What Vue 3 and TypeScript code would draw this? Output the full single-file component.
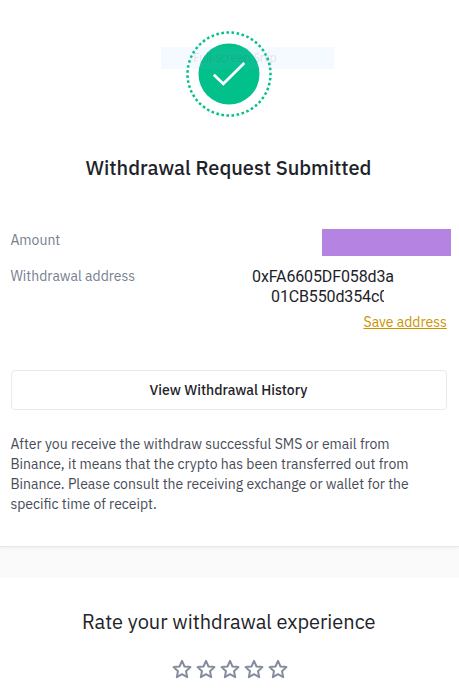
<script setup lang="ts">
import { ref } from 'vue'

const notice: string[] = [
  'After you receive the withdraw successful SMS or email from',
  'Binance, it means that the crypto has been transferred out from',
  'Binance. Please consult the receiving exchange or wallet for the',
  'specific time of receipt.',
]
const stars: number[] = [1, 2, 3, 4, 5]
const rating = ref<number>(0)
</script>

<template>
  <main class="page">
    <section class="result">
      <div class="status">
        <svg class="badge" width="86" height="86" viewBox="0 0 86 86" aria-hidden="true">
          <circle cx="43" cy="43" r="41.5" fill="none" stroke="#02c089" stroke-width="2.5" pathLength="102" stroke-dasharray="1 1" stroke-dashoffset="0.5" />
          <circle cx="43" cy="43" r="30.5" fill="#02c089" />
          <path d="M27.8 43.8 37.3 52.8 58.3 32" fill="none" stroke="#fff" stroke-width="2.7" />
        </svg>
        <div class="snip">Full-screen Snip</div>
      </div>
      <h1 class="title">Withdrawal Request Submitted</h1>
      <div class="row amount">
        <span class="label">Amount</span>
        <span class="mask"></span>
      </div>
      <div class="row">
        <span class="label">Withdrawal address</span>
        <div class="address">
          <span>0xFA6605DF058d3a</span>
          <span class="tail">01CB550d354c0</span>
        </div>
      </div>
      <a class="save">Save address</a>
      <button class="history" type="button">View Withdrawal History</button>
      <p class="notice">
        <span v-for="(line, i) in notice" :key="i">{{ line }}</span>
      </p>
    </section>
    <section class="rate">
      <h2>Rate your withdrawal experience</h2>
      <div class="stars">
        <svg v-for="s in stars" :key="s" width="24" height="24" viewBox="0 0 24 24" @click="rating = s">
          <path
            d="M12 3.8 14.5 9.5 20.4 10.1 16 14.3 17.2 20.2 12 17.2 6.8 20.2 8 14.3 3.6 10.1 9.5 9.5Z"
            :fill="s <= rating ? '#848e9c' : 'none'" stroke="#848e9c" stroke-width="2" stroke-linejoin="round"
          />
        </svg>
      </div>
    </section>
  </main>
</template>

<style>
body { background: #fafafa; }
</style>
<style scoped>
.page { width: 459px; height: 696px; overflow: hidden; background: #fafafa; font-family: "IBM Plex Sans", Roboto, sans-serif; color: #1e2329; }
.result { box-sizing: border-box; height: 547px; padding: 31px 12.6px 0 10.4px; background: #fff; border-bottom: 1px solid #e8e8e8; box-shadow: 0 1px 3px rgba(0, 0, 0, .05); }
.status { position: relative; height: 86px; }
.badge { display: block; margin-left: 175.6px; }
.snip { position: absolute; left: 150.6px; top: 16px; width: 173px; height: 22px; padding-left: 32px; box-sizing: border-box; background: rgba(120, 190, 250, .08); color: rgba(110, 40, 40, .12); font: 12px/22px "Noto Sans", sans-serif; letter-spacing: -.3px; white-space: nowrap; }
.title { margin: 36px 0 0; height: 30px; font-size: 20px; line-height: 30px; font-weight: 500; text-align: center; white-space: nowrap; }
.row { display: flex; justify-content: space-between; height: 36px; font-size: 14px; line-height: 20px; }
.amount { margin-top: 47px; }
.label { color: #76808f; }
.mask { width: 129px; height: 27px; margin: -1px -4.6px 0 0; background: #b584e3; }
.address { display: flex; flex-direction: column; width: 194.4px; padding-top: 1px; color: #1e2329; font-family: Roboto, sans-serif; font-size: 16px; letter-spacing: -.13px; white-space: nowrap; }
.address span { flex: none; }
.tail { width: 113px; margin-left: 19px; overflow: hidden; }
.save { display: block; width: max-content; margin: 10px -.4px 0 auto; color: #c99400; font-size: 14px; line-height: 20px; text-decoration: underline; }
.history { display: block; box-sizing: border-box; width: 436px; height: 40px; margin: 38px 0 0 .6px; padding: 0 1px 0 0; border: 1px solid #eaeaea; border-radius: 4px; background: #fff; color: #1e2329; font: 500 14px/20px "IBM Plex Sans", Roboto, sans-serif; }
.notice { display: flex; flex-direction: column; align-items: flex-start; margin: 24px 0 0; color: #474d57; font-size: 14px; line-height: 20px; white-space: nowrap; }
.rate { height: 118px; margin-top: 31px; box-sizing: border-box; padding: 29px 1.5px 0 0; background: #fff; }
h2 { margin: 0; font-size: 20px; line-height: 30px; font-weight: 400; text-align: center; white-space: nowrap; }
.stars { display: flex; justify-content: center; margin: 20px -1.5px 0 0; }
</style>
